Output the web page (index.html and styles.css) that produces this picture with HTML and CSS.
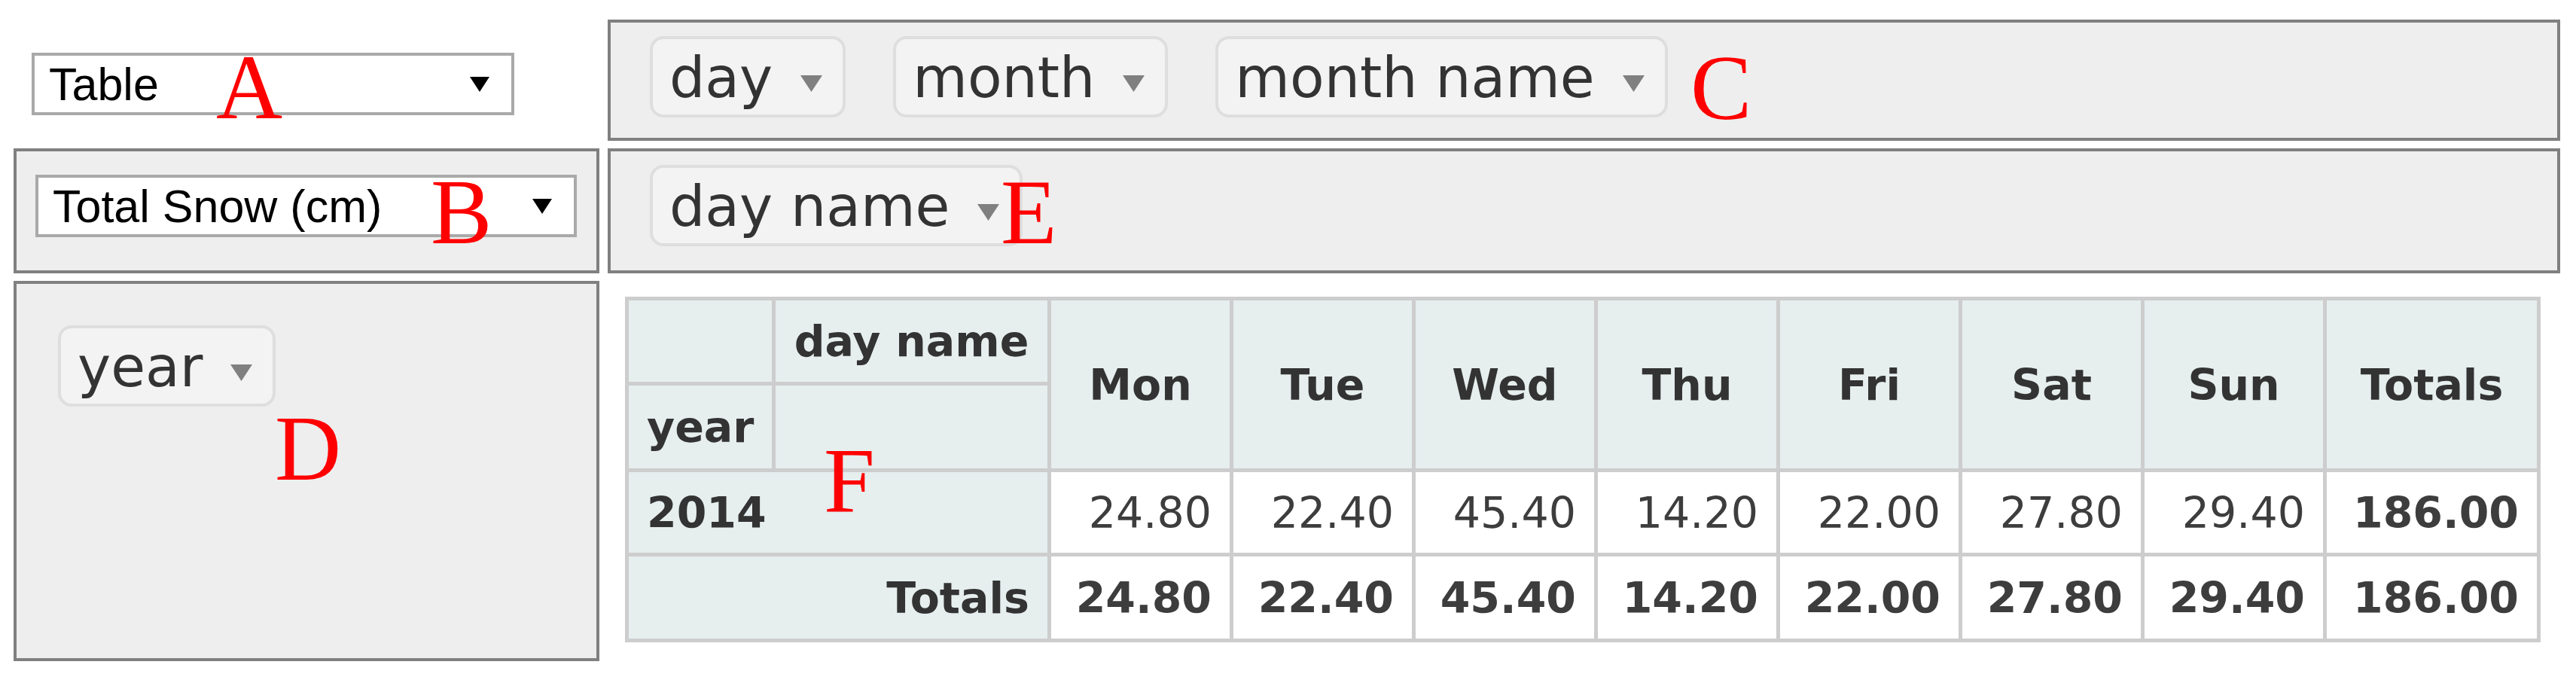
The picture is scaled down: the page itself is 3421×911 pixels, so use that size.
FILE: index.html
```html
<!DOCTYPE html>
<html lang="en">
<head>
<meta charset="utf-8">
<title>Pivot table UI</title>
<link rel="stylesheet" href="styles.css">
</head>
<body>
<div class="pvt-ui">
  <div class="cell renderer">
    <div class="select select-renderer">
      <span class="select-text">Table</span>
      <svg class="select-arrow" viewBox="0 0 26 20"><polygon points="0,0 26,0 13,20"/></svg>
    </div>
  </div>
  <div class="cell axis axis-unused">
    <span class="attr"><span class="attr-name">day</span><svg class="tri" viewBox="0 0 29 22"><polygon points="0,0 29,0 14.5,22"/></svg></span>
    <span class="attr"><span class="attr-name">month</span><svg class="tri" viewBox="0 0 29 22"><polygon points="0,0 29,0 14.5,22"/></svg></span>
    <span class="attr"><span class="attr-name">month name</span><svg class="tri" viewBox="0 0 29 22"><polygon points="0,0 29,0 14.5,22"/></svg></span>
  </div>
  <div class="cell axis vals">
    <div class="select select-agg">
      <span class="select-text">Total Snow (cm)</span>
      <svg class="select-arrow" viewBox="0 0 26 20"><polygon points="0,0 26,0 13,20"/></svg>
    </div>
  </div>
  <div class="cell axis axis-cols">
    <span class="attr"><span class="attr-name">day name</span><svg class="tri" viewBox="0 0 29 22"><polygon points="0,0 29,0 14.5,22"/></svg></span>
  </div>
  <div class="cell axis axis-rows">
    <span class="attr"><span class="attr-name">year</span><svg class="tri" viewBox="0 0 29 22"><polygon points="0,0 29,0 14.5,22"/></svg></span>
  </div>
  <div class="cell renderer-area">
    <div class="pvt-table">
      <div class="th"></div>
      <div class="th axis-label-col">day name</div>
      <div class="th col-label">Mon</div>
      <div class="th col-label">Tue</div>
      <div class="th col-label">Wed</div>
      <div class="th col-label">Thu</div>
      <div class="th col-label">Fri</div>
      <div class="th col-label">Sat</div>
      <div class="th col-label">Sun</div>
      <div class="th col-label">Totals</div>
      <div class="th">year</div>
      <div class="th"></div>

      <div class="th row-label">2014</div>
      <div class="td">24.80</div>
      <div class="td">22.40</div>
      <div class="td">45.40</div>
      <div class="td">14.20</div>
      <div class="td">22.00</div>
      <div class="td">27.80</div>
      <div class="td">29.40</div>
      <div class="td total">186.00</div>

      <div class="th total-label">Totals</div>
      <div class="td total">24.80</div>
      <div class="td total">22.40</div>
      <div class="td total">45.40</div>
      <div class="td total">14.20</div>
      <div class="td total">22.00</div>
      <div class="td total">27.80</div>
      <div class="td total">29.40</div>
      <div class="td total">186.00</div>
    </div>
  </div>

  <span class="mark mark-a">A</span>
  <span class="mark mark-b">B</span>
  <span class="mark mark-c">C</span>
  <span class="mark mark-d">D</span>
  <span class="mark mark-e">E</span>
  <span class="mark mark-f">F</span>
</div>
</body>
</html>
```

FILE: styles.css
```css
* { box-sizing: border-box; }

html, body {
  margin: 0;
  padding: 0;
  background: #ffffff;
}

body {
  font-family: "DejaVu Sans", Verdana, sans-serif;
  color: #333333;
}

.pvt-ui {
  position: relative;
  display: grid;
  grid-template-columns: 778px 2593px;
  grid-template-rows: 161px 166px 505px;
  column-gap: 11px;
  row-gap: 10px;
  padding: 26px 0 0 18px;
  width: 3421px;
  height: 911px;
}

.axis {
  border: 4px solid #808080;
  background: #eeeeee;
}

.axis-unused,
.axis-cols {
  display: flex;
  align-items: flex-start;
  gap: 63px;
  padding: 18px 0 0 52px;
}

.axis-rows {
  display: flex;
  flex-direction: column;
  align-items: flex-start;
  padding: 55px 0 0 55px;
}

.vals {
  padding: 31px 0 0 25px;
}

.renderer {
  padding: 44px 0 0 24px;
}

.select {
  display: flex;
  align-items: center;
  justify-content: space-between;
  height: 83px;
  border: 4px solid #a9a9a9;
  background: #ffffff;
  font-family: "Liberation Sans", Arial, sans-serif;
  font-size: 61px;
  color: #000000;
  padding: 0 29px 0 19px;
  white-space: nowrap;
}

.select-renderer { width: 641px; }
.select-agg { width: 719px; }

.select-arrow {
  width: 26px;
  height: 20px;
  fill: #000000;
  flex: none;
}

.attr {
  display: inline-flex;
  align-items: center;
  height: 108px;
  border: 4px solid #dedede;
  border-radius: 18px;
  background: #f3f3f3;
  padding: 9px 27px 5px 22px;
  font-size: 74.6px;
  line-height: 86px;
  color: #333333;
  white-space: nowrap;
}

.tri {
  width: 29px;
  height: 22px;
  margin: 14px 0 0 37px;
  fill: #808080;
  flex: none;
}

.renderer-area {
  padding: 21px 0 0 23px;
}

.pvt-table {
  display: grid;
  grid-template-columns: 190px 361px repeat(7, 237px) 279px;
  grid-template-rows: 108px 110px 107px 109px;
  gap: 5px;
  padding: 5px;
  background: #cdcdcd;
  width: max-content;
  font-size: 57px;
}

.pvt-table > div {
  display: flex;
  align-items: center;
  padding: 0 24px;
  white-space: nowrap;
}

.th {
  background: #e6eeee;
  font-weight: bold;
  color: #333333;
}

.td {
  background: #ffffff;
  color: #3d3d3d;
  justify-content: flex-end;
}

.col-label {
  grid-row: span 2;
  justify-content: center;
}

.axis-label-col { justify-content: center; }

.row-label { grid-column: span 2; }

.total-label {
  grid-column: span 2;
  justify-content: flex-end;
}

.total { font-weight: bold; }

.mark {
  position: absolute;
  font-family: "Liberation Serif", "Times New Roman", serif;
  font-size: 122px;
  line-height: 122px;
  color: #ff0000;
}

.mark-a { left: 287px; top: 55px; }
.mark-b { left: 572px; top: 221px; }
.mark-c { left: 2245px; top: 56px; }
.mark-d { left: 365px; top: 535px; }
.mark-e { left: 1329px; top: 221px; }
.mark-f { left: 1094px; top: 577px; }
```
